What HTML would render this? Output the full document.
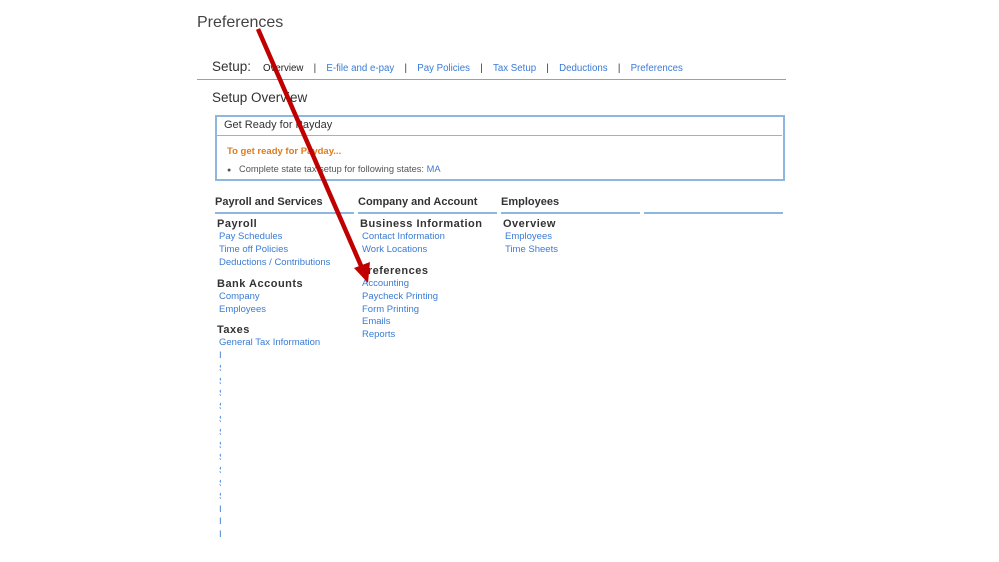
<!DOCTYPE html><html><head><style>
body{margin:0;width:999px;height:562px;background:#fff;position:relative;font-family:"Liberation Sans",Arial,sans-serif;overflow:hidden}
.a{position:absolute;white-space:nowrap}
.l{color:#3a7bd5;font-size:9.5px}
.h{font-weight:bold;color:#333;font-size:11px;letter-spacing:.5px}
.c{color:#333;font-size:11px;font-weight:bold}
.bar{position:absolute;height:2px;background:#8db6e0}
.cl{position:absolute;left:219px;width:2px;overflow:hidden;color:#3a7bd5;font-size:9.5px}
.s{display:inline-block;width:23px;text-align:center;color:#333}
</style></head><body>
<div class="a" style="left:197px;top:14px;font-size:16px;color:#444">Preferences</div>
<div class="a" style="left:212px;top:59px;font-size:13.5px;color:#333">Setup:</div>
<div class="a" style="left:263px;top:63px;font-size:9.7px;color:#222">Overview<span class="s">|</span><span style="color:#3a7bd5">E-file and e-pay</span><span class="s">|</span><span style="color:#3a7bd5">Pay Policies</span><span class="s">|</span><span style="color:#3a7bd5">Tax Setup</span><span class="s">|</span><span style="color:#3a7bd5">Deductions</span><span class="s">|</span><span style="color:#3a7bd5">Preferences</span></div>
<div class="bar" style="left:197px;top:79px;width:589px;height:1px;background:#7aa7d6"></div>
<div class="a" style="left:212px;top:90px;font-size:13.5px;color:#333">Setup Overview</div>
<div style="position:absolute;left:215px;top:115px;width:566px;height:62px;border:2px solid #8db6e0"></div>
<div class="bar" style="left:216px;top:135px;width:566px;height:1px"></div>
<div class="a" style="left:224px;top:119px;font-size:11px;color:#333">Get Ready for Payday</div>
<div class="a" style="left:227px;top:146px;font-size:9.5px;color:#e07b1a;font-weight:bold">To get ready for Payday...</div>
<div class="a" style="left:227px;top:164px;font-size:9.3px;color:#555"><span style="font-size:7px">●</span>&nbsp;&nbsp; Complete state tax setup for following states: <span style="color:#3a7bd5">MA</span></div>
<div class="a c" style="left:215px;top:196px">Payroll and Services</div>
<div class="a c" style="left:358px;top:196px">Company and Account</div>
<div class="a c" style="left:501px;top:196px">Employees</div>
<div class="bar" style="left:215px;top:212px;width:139px"></div>
<div class="bar" style="left:358px;top:212px;width:139px"></div>
<div class="bar" style="left:501px;top:212px;width:139px"></div>
<div class="bar" style="left:644px;top:212px;width:139px"></div>
<div class="a h" style="left:217px;top:218px">Payroll</div>
<div class="a l" style="left:219px;top:231px;line-height:12.8px">Pay Schedules<br>Time off Policies<br>Deductions / Contributions</div>
<div class="a h" style="left:217px;top:278px">Bank Accounts</div>
<div class="a l" style="left:219px;top:291px;line-height:12.8px">Company<br>Employees</div>
<div class="a h" style="left:217px;top:324px">Taxes</div>
<div class="a l" style="left:219px;top:337px">General Tax Information</div>
<div class="a h" style="left:360px;top:218px">Business Information</div>
<div class="a l" style="left:362px;top:231px;line-height:12.8px">Contact Information<br>Work Locations</div>
<div class="a h" style="left:360px;top:265px">Preferences</div>
<div class="a l" style="left:362px;top:278px;line-height:12.8px">Accounting<br>Paycheck Printing<br>Form Printing<br>Emails<br>Reports</div>
<div class="a h" style="left:503px;top:218px">Overview</div>
<div class="a l" style="left:505px;top:231px;line-height:12.8px">Employees<br>Time Sheets</div>
<div class="cl" style="top:350px;line-height:12.8px">I<br>S<br>S<br>S<br>S<br>S<br>S<br>S<br>S<br>S<br>S<br>S<br>I<br>I<br>I</div>
<svg style="position:absolute;left:0;top:0" width="999" height="562"><line x1="258" y1="29" x2="362" y2="268" stroke="#c00000" stroke-width="4.5"/><polygon points="368,283 354,268 370,262" fill="#c00000"/></svg>
</body></html>
